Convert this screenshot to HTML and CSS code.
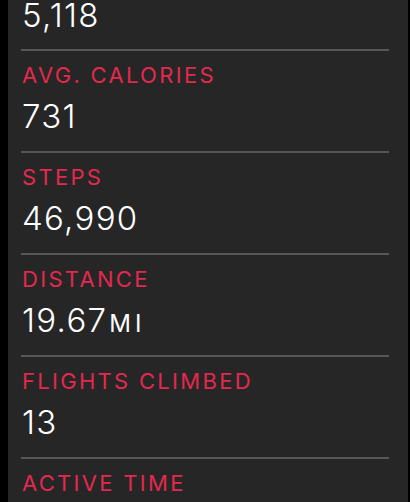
FILE: index.html
```html
<!DOCTYPE html>
<html lang="en">
<head>
    <meta charset="UTF-8">
    <meta name="viewport" content="width=device-width, initial-scale=1.0">
    <title>Workout Totals</title>
    <link rel="stylesheet" href="styles.css">
</head>
<body>

    <div class="panel">
        <!-- first row is scrolled, only the value shows -->
        <div class="stat stat-top">
            <div class="value">5,118</div>
        </div>

        <div class="stat">
            <div class="label">AVG. CALORIES</div>
            <div class="value">731</div>
        </div>

        <div class="stat">
            <div class="label">STEPS</div>
            <div class="value">46,990</div>
        </div>

        <div class="stat">
            <div class="label">DISTANCE</div>
            <div class="value">19.67<span class="unit">MI</span></div>
        </div>

        <div class="stat">
            <div class="label">FLIGHTS CLIMBED</div>
            <div class="value">13</div>
        </div>

        <div class="stat">
            <div class="label">ACTIVE TIME</div>
        </div>
    </div>

</body>
</html>
```

FILE: styles.css
```css
html, body {
    margin: 0;
    height: 100%;
    background: #000;
    overflow: hidden;
}

body {
    font-family: Inter, "Noto Sans", sans-serif;
    padding: 0 2px 0 8px;
}

.panel {
    background: #262626;
    height: 100%;
    padding-left: 13px;
    padding-right: 19px;
}

.stat {
    border-bottom: 2px solid #575757;
    padding: 11px 0 16px 1px;
}

.stat-top {
    padding-top: 0;
    padding-bottom: 19px;
}

.label {
    color: #e2294f;
    font-size: 22px;
    line-height: 26px;
    letter-spacing: 2.3px;
}

.value {
    color: #fff;
    font-size: 33px;
    font-weight: 350;
    line-height: 38px;
    letter-spacing: 1.3px;
    margin-top: 9px;
}

.stat-top .value {
    margin-top: 0;
    line-height: 30px;
}

.unit {
    font-size: 24px;
    font-weight: 400;
    line-height: 1;
    letter-spacing: 4px;
    margin-left: 2px;
}
```
